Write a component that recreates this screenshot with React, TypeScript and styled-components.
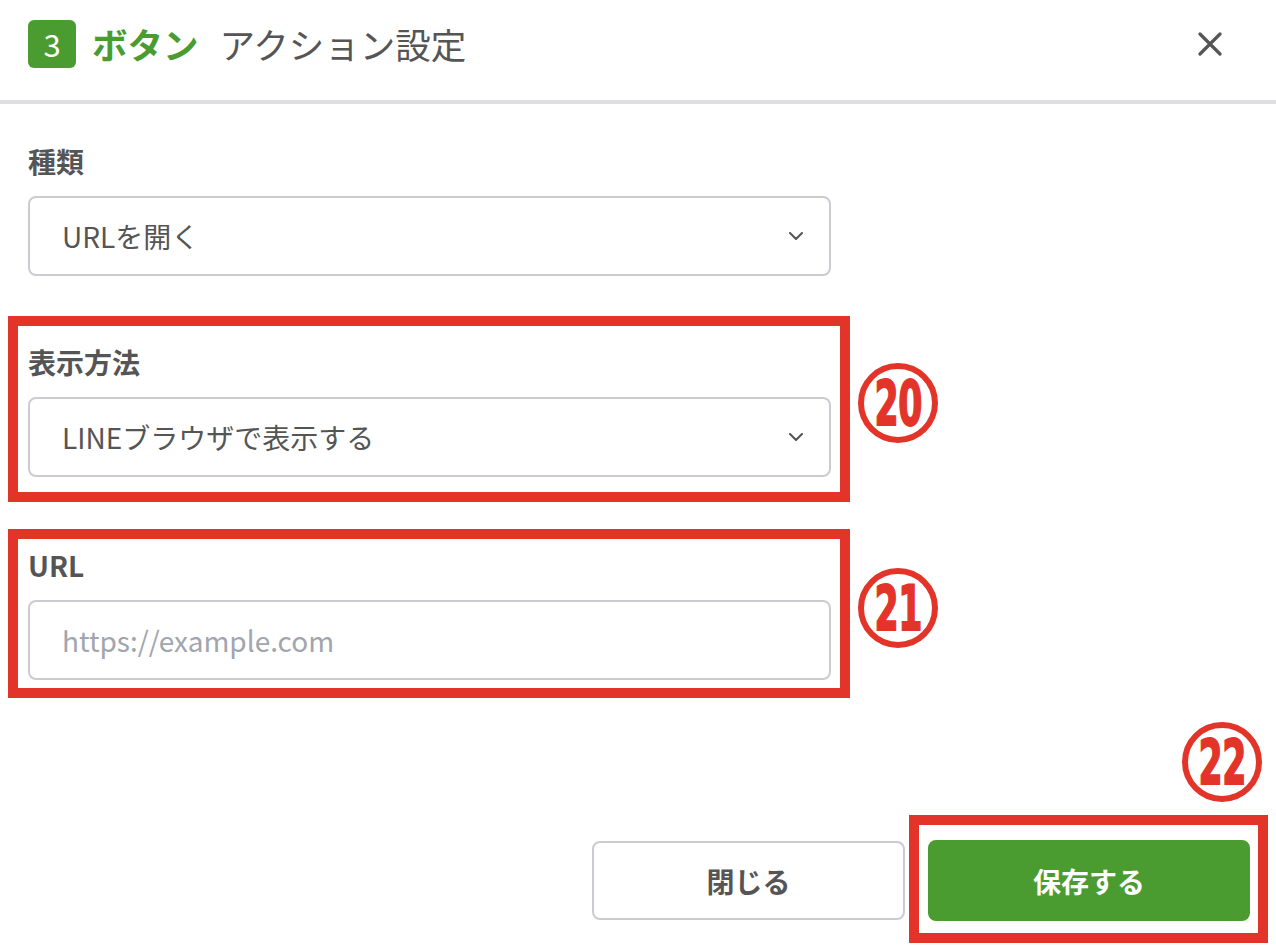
import styled, { createGlobalStyle } from "styled-components";

const GlobalStyle = createGlobalStyle`
  html, body {
    margin: 0;
    padding: 0;
    background: #fff;
  }
  body {
    font-family: "Noto Sans CJK JP", "Noto Sans", sans-serif;
    color: #555;
  }
`;

const RED = "#e3342a";
const GREEN = "#4a9c30";

const Page = styled.div`
  width: 1276px;
  height: 946px;
  overflow: hidden;
  background: #fff;
`;

const Header = styled.header`
  display: flex;
  align-items: center;
  justify-content: space-between;
  height: 88px;
  padding: 0 54px 12px 28px;
  border-bottom: 4px solid #dfdfe2;
`;

const Title = styled.h1`
  display: flex;
  align-items: center;
  margin: 0;
  font-size: 35.5px;
  font-weight: 400;
  color: #555;
  line-height: 48px;
`;

const StepBadge = styled.span`
  display: inline-flex;
  align-items: center;
  justify-content: center;
  width: 48px;
  height: 48px;
  border-radius: 6px;
  background: ${GREEN};
  color: #fff;
  font-size: 31px;
  font-weight: 400;
  margin-right: 16px;
`;

const TitleAccent = styled.span`
  color: ${GREEN};
  font-weight: 700;
  margin-right: 21px;
`;

const CloseIcon = styled.button`
  display: flex;
  padding: 0;
  border: 0;
  background: none;
  cursor: pointer;
`;

const Body = styled.main`
  display: flex;
  flex-direction: column;
  padding: 37px 0 0 8px;
`;

const Row = styled.div<{ $top?: number }>`
  display: flex;
  align-items: center;
  margin-top: ${(p) => p.$top ?? 0}px;
`;

const Field = styled.div<{ $highlight?: boolean; $pad?: string }>`
  display: flex;
  flex-direction: column;
  gap: 15px;
  border: 10px solid ${(p) => (p.$highlight ? RED : "transparent")};
  border-top-width: ${(p) => (p.$highlight ? 10 : 0)}px;
  border-bottom-width: ${(p) => (p.$highlight ? 10 : 0)}px;
  padding: ${(p) => p.$pad ?? "0 9px 0 10px"};
`;

const Label = styled.label`
  font-size: 28px;
  font-weight: 700;
  line-height: 40px;
  color: #555;
`;

const SelectBox = styled.div`
  display: flex;
  align-items: center;
  justify-content: space-between;
  box-sizing: border-box;
  width: 803px;
  height: 80px;
  padding: 0 26px 0 32px;
  border: 2px solid #cbccd1;
  border-radius: 8px;
  font-size: 28px;
  color: #555;
`;

const TextInput = styled.input`
  box-sizing: border-box;
  width: 803px;
  height: 80px;
  padding: 0 32px;
  border: 2px solid #cbccd1;
  border-radius: 8px;
  font-family: "Noto Sans CJK JP", "Noto Sans", sans-serif;
  font-size: 28px;
  color: #555;
  outline: none;

  &::placeholder {
    color: #a1a5ae;
  }
`;

const Marker = styled.div<{ $lift?: number }>`
  display: flex;
  align-items: center;
  justify-content: center;
  box-sizing: border-box;
  width: 80px;
  height: 80px;
  border: 6px solid ${RED};
  border-radius: 50%;
  margin-left: 8px;
  margin-bottom: ${(p) => p.$lift ?? 0}px;
  flex-shrink: 0;
`;

const MarkerDigits = styled.span`
  display: inline-block;
  font-family: "DejaVu Sans", sans-serif;
  font-weight: 700;
  font-size: 62px;
  line-height: 1;
  color: ${RED};
  -webkit-text-stroke: 2px ${RED};
  transform: scaleX(0.56);
  letter-spacing: -1px;
  margin-top: 2px;
`;

const Footer = styled.footer`
  display: flex;
  justify-content: flex-end;
  align-items: flex-end;
  gap: 4px;
  margin-top: 24px;
  padding-right: 8px;
`;

const SaveColumn = styled.div`
  display: flex;
  flex-direction: column;
  align-items: flex-end;
  gap: 13px;
`;

const MarkerSlot = styled.div`
  margin-right: 6px;
`;

const SaveFrame = styled.div`
  display: flex;
  border: 10px solid ${RED};
  padding: 15px 8px 12px 9px;
`;

const Button = styled.button<{ $primary?: boolean }>`
  display: flex;
  align-items: center;
  justify-content: center;
  box-sizing: border-box;
  width: ${(p) => (p.$primary ? 322 : 313)}px;
  height: ${(p) => (p.$primary ? 81 : 79)}px;
  border-radius: 8px;
  border: 2px solid ${(p) => (p.$primary ? GREEN : "#cbccd1")};
  background: ${(p) => (p.$primary ? GREEN : "#fff")};
  color: ${(p) => (p.$primary ? "#fff" : "#555")};
  font-family: "Noto Sans CJK JP", "Noto Sans", sans-serif;
  font-size: 28px;
  font-weight: 700;
  margin-bottom: ${(p) => (p.$primary ? 0 : 23)}px;
  cursor: pointer;
`;

function Chevron() {
  return (
    <svg width="14" height="8" viewBox="0 0 14 8" fill="none">
      <polyline
        points="1,1 7,7 13,1"
        stroke="#555"
        strokeWidth="2"
        strokeLinecap="round"
        strokeLinejoin="round"
      />
    </svg>
  );
}

function CircledNumber({ value, lift }: { value: string; lift?: number }) {
  return (
    <Marker $lift={lift}>
      <MarkerDigits>{value}</MarkerDigits>
    </Marker>
  );
}

export default function App() {
  return (
    <>
      <GlobalStyle />
      <Page>
        <Header>
          <Title>
            <StepBadge>3</StepBadge>
            <TitleAccent>ボタン</TitleAccent>
            アクション設定
          </Title>
          <CloseIcon aria-label="閉じる">
            <svg width="24" height="24" viewBox="0 0 24 24">
              <path
                d="M2 2 L22 22 M22 2 L2 22"
                stroke="#555"
                strokeWidth="3.2"
                strokeLinecap="round"
              />
            </svg>
          </CloseIcon>
        </Header>

        <Body>
          <Row>
            <Field>
              <Label>種類</Label>
              <SelectBox>
                URLを開く
                <Chevron />
              </SelectBox>
            </Field>
          </Row>

          <Row $top={40}>
            <Field $highlight $pad="16px 9px 15px 10px">
              <Label>表示方法</Label>
              <SelectBox>
                LINEブラウザで表示する
                <Chevron />
              </SelectBox>
            </Field>
            <CircledNumber value="20" lift={12} />
          </Row>

          <Row $top={27}>
            <Field $highlight $pad="6px 9px 8px 10px">
              <Label>URL</Label>
              <TextInput placeholder="https://example.com" />
            </Field>
            <CircledNumber value="21" lift={12} />
          </Row>

          <Footer>
            <Button>閉じる</Button>
            <SaveColumn>
              <MarkerSlot>
                <CircledNumber value="22" />
              </MarkerSlot>
              <SaveFrame>
                <Button $primary>保存する</Button>
              </SaveFrame>
            </SaveColumn>
          </Footer>
        </Body>
      </Page>
    </>
  );
}
